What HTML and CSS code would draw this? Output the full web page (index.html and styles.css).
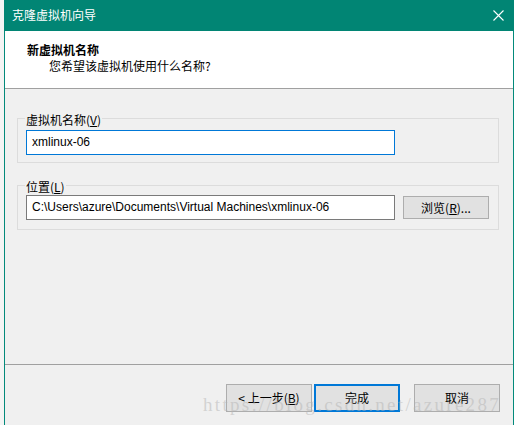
FILE: index.html
```html
<!DOCTYPE html>
<html lang="zh-CN">
<head>
<meta charset="utf-8">
<title>克隆虚拟机向导</title>
<link rel="stylesheet" href="styles.css">
</head>
<body>
<div class="screen">
  <div class="behind"></div>
  <div class="window">
    <div class="titlebar">
      <span class="title">克隆虚拟机向导</span>
      <svg class="close" width="11" height="11" viewBox="0 0 11 11"><path d="M0.5 0.5 L10.5 10.5 M10.5 0.5 L0.5 10.5" stroke="#ffffff" stroke-width="1.1" fill="none"/></svg>
    </div>
    <div class="header">
      <div class="h-title">新虚拟机名称</div>
      <div class="h-sub">您希望该虚拟机使用什么名称?</div>
    </div>
    <div class="body">
      <fieldset class="group group-name">
        <legend>虚拟机名称(<u>V</u>)</legend>
        <div class="row">
          <div class="input focus">xmlinux-06</div>
        </div>
      </fieldset>
      <fieldset class="group group-loc">
        <legend>位置(<u>L</u>)</legend>
        <div class="row">
          <div class="input">C:\Users\azure\Documents\Virtual Machines\xmlinux-06</div>
          <div class="btn browse">浏览(<u>R</u>)...</div>
        </div>
      </fieldset>
    </div>
    <div class="footer">
      <div class="btn wbtn">&lt; 上一步(<u>B</u>)</div>
      <div class="btn wbtn primary">完成</div>
      <div class="btn wbtn cancel">取消</div>
    </div>
    <div class="watermark">https://blog.csdn.net/azure287</div>
  </div>
</div>
</body>
</html>
```

FILE: styles.css
```css
html, body {
  margin: 0;
  padding: 0;
  background: #f0f0f0;
}
body {
  width: 514px;
  height: 425px;
  overflow: hidden;
  font-family: "Noto Sans CJK SC", "Noto Sans", sans-serif;
  font-size: 12px;
  color: #000;
}
.screen {
  display: flex;
  width: 514px;
  height: 425px;
}
.behind {
  width: 4px;
  flex: none;
  background: #f4f4f4;
}
.window {
  position: relative;
  width: 508px;
  height: 425px;
  flex: none;
  border-left: 1px solid #038a7b;
  border-right: 1px solid #038a7b;
  background: #f0f0f0;
  display: flex;
  flex-direction: column;
}
.titlebar {
  height: 31px;
  flex: none;
  background: #018574;
  color: #fff;
  display: flex;
  align-items: center;
  justify-content: space-between;
  padding: 0 10px 0 8px;
  margin: 0 -1px;
}
.title {
  font-size: 12px;
  line-height: 16px;
  margin-top: -1px;
}
.close {
  display: block;
  margin-top: -1px;
}
.header {
  flex: none;
  background: #fff;
  border-bottom: 1px solid #a0a0a0;
  padding: 11px 0 0 22px;
  box-sizing: border-box;
  height: 58px;
}
.h-title {
  font-weight: bold;
  line-height: 16px;
}
.h-sub {
  line-height: 16px;
  margin-left: 22px;
}
.body {
  height: 275px;
  flex: none;
  box-sizing: border-box;
  padding: 20px 14px 0 12px;
}
.group {
  margin: 0;
  border: 1px solid #dcdcdc;
  padding: 0 8px 7px 8px;
  min-width: 0;
}
.group legend {
  padding: 4px 1px 0 1px;
  margin-left: -1px;
  line-height: 14px;
}
.group-name .row {
  margin-top: 3px;
}
.group-loc {
  margin-top: 13px;
  padding-bottom: 9px;
}
.group-loc .row {
  margin-top: 1px;
}
.row {
  display: flex;
  align-items: center;
  gap: 8px;
}
.input {
  width: 369px;
  height: 25px;
  box-sizing: border-box;
  border: 1px solid #7a7a7a;
  background: #fff;
  padding-left: 5px;
  font-family: "Liberation Sans", "Noto Sans CJK SC", sans-serif;
  font-size: 12px;
  line-height: 22px;
  white-space: nowrap;
}
.input.focus {
  border-color: #0078d7;
}
.btn {
  box-sizing: border-box;
  background: #e1e1e1;
  border: 1px solid #adadad;
  text-align: center;
  white-space: nowrap;
}
.btn u {
  text-decoration: underline;
  text-underline-offset: 1px;
}
.browse {
  width: 86px;
  height: 23px;
  line-height: 21px;
}
.footer {
  flex: 1;
  border-top: 1px solid #a0a0a0;
  display: flex;
  justify-content: flex-end;
  align-items: flex-start;
  padding: 19px 13px 0 0;
}
.wbtn {
  width: 86px;
  height: 28px;
  line-height: 26px;
}
.wbtn + .wbtn {
  margin-left: 2px;
}
.primary {
  border: 2px solid #0078d7;
  line-height: 24px;
}
.wbtn.cancel {
  margin-left: 14px;
}
.watermark {
  position: absolute;
  left: 198px;
  top: 394px;
  font-family: "Liberation Serif", serif;
  font-size: 19px;
  letter-spacing: 2.3px;
  color: rgba(180, 180, 180, 0.5);
  white-space: nowrap;
  pointer-events: none;
}
```
